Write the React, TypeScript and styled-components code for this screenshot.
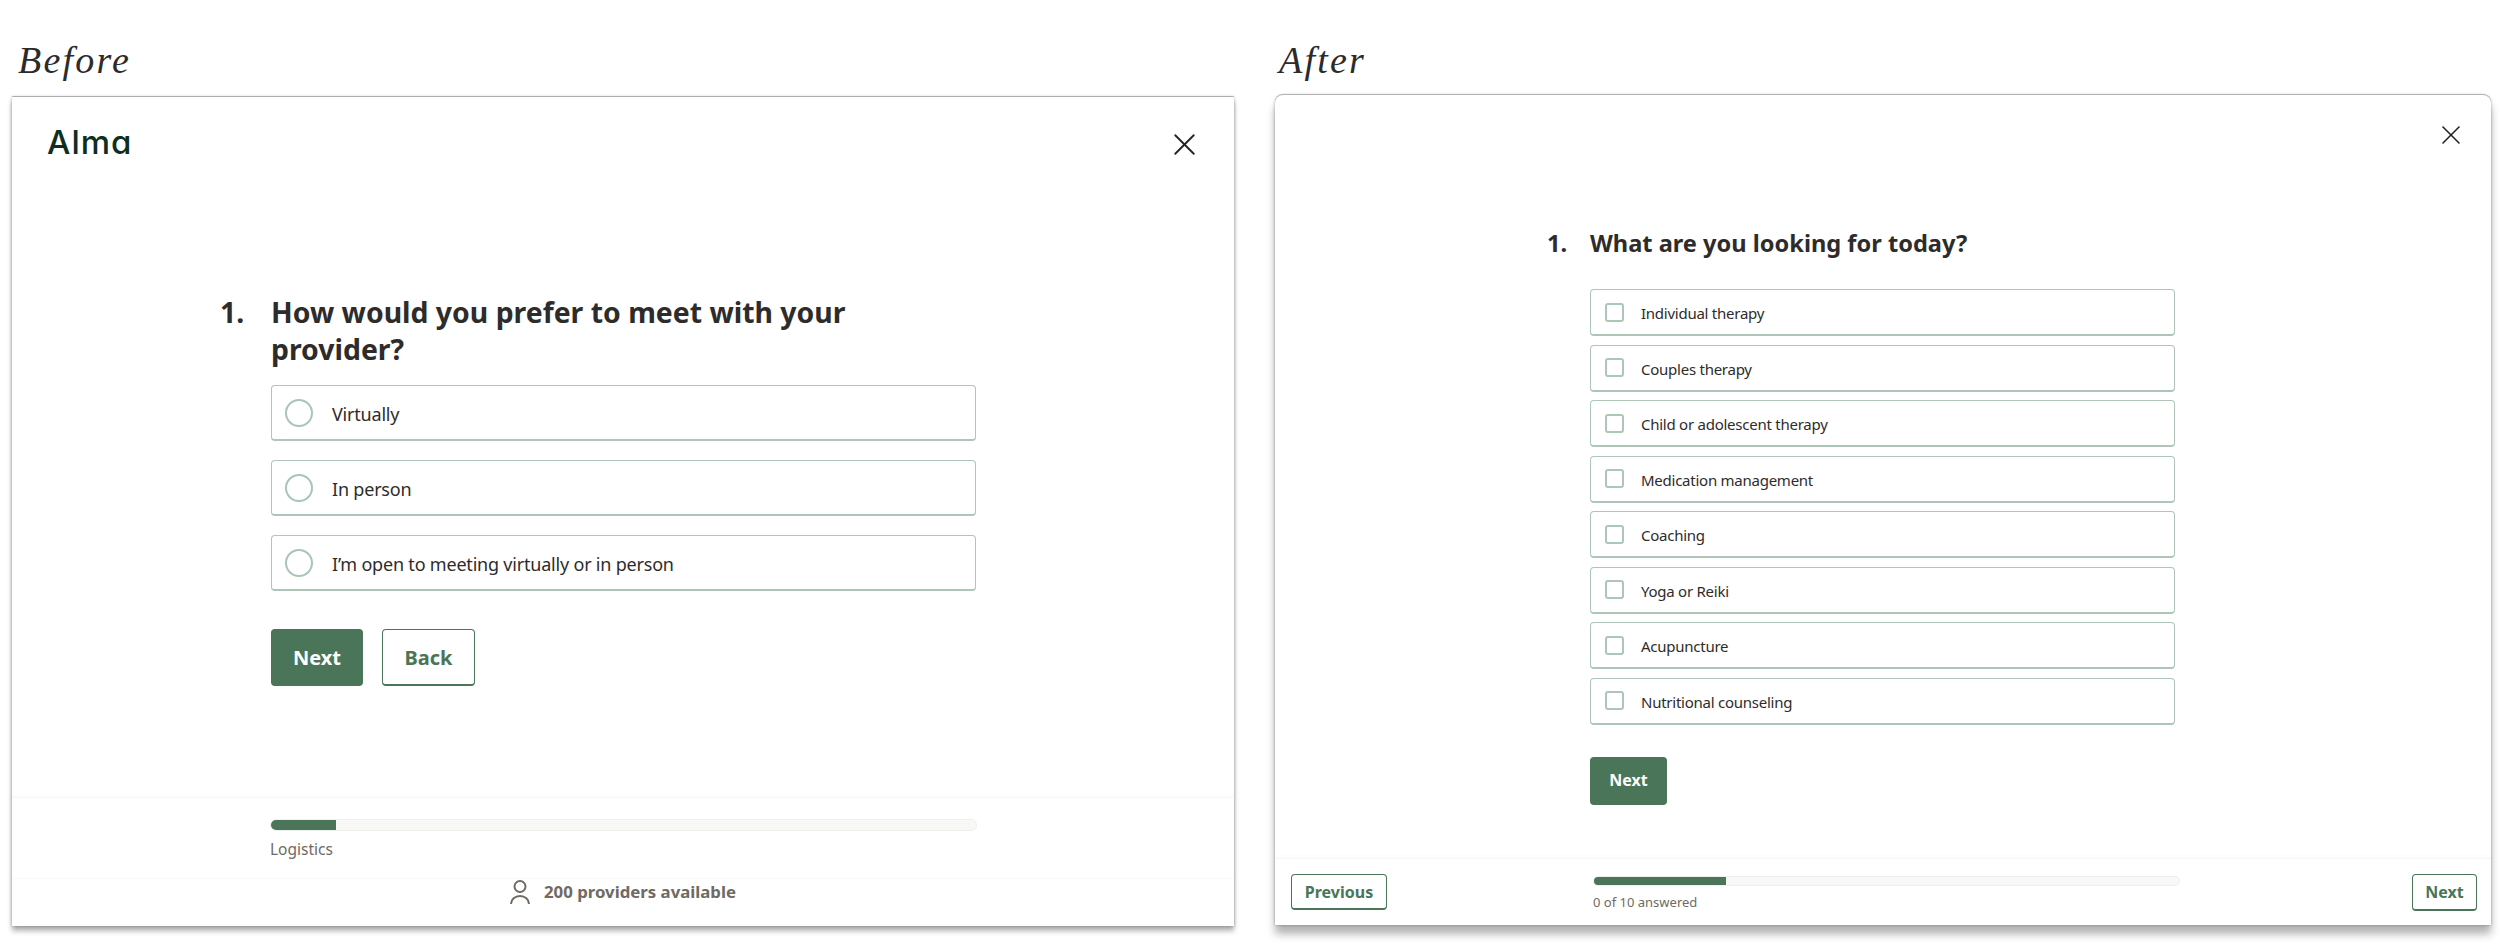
import React from "react";
import styled, { createGlobalStyle } from "styled-components";
import { X } from "lucide-react";

const GREEN = "#4a7558";
const BORDER = "#aec6b8";
const INK = "#2e2c2b";
const MUTED = "#6f6a63";

const GlobalStyle = createGlobalStyle`
  html, body {
    margin: 0;
    background: #ffffff;
    font-family: "Noto Sans", sans-serif;
    color: ${INK};
  }
`;

const Page = styled.div`
  display: flex;
  gap: 41px;
  width: 2500px;
  height: 944px;
  padding-left: 12px;
  box-sizing: border-box;
  overflow: hidden;
`;

const Column = styled.div<{ $width: number }>`
  width: ${(p) => p.$width}px;
  display: flex;
  flex-direction: column;
`;

const Label = styled.div<{ $height: number; $indent: number }>`
  height: ${(p) => p.$height}px;
  padding: 37px 0 0 ${(p) => p.$indent}px;
  box-sizing: border-box;
  font-family: "Liberation Serif", serif;
  font-style: italic;
  font-size: 38px;
  line-height: 46px;
  letter-spacing: 2.2px;
  color: #2b2b2b;
`;

const Card = styled.div<{ $height: number; $radius: number; $drop: number }>`
  height: ${(p) => p.$height}px;
  display: flex;
  flex-direction: column;
  background: #fff;
  border-radius: ${(p) => p.$radius}px ${(p) => p.$radius}px 0 0;
  box-shadow: 0 ${(p) => p.$drop}px ${(p) => p.$drop}px rgba(0, 0, 0, 0.3), 0 0 3px rgba(0, 0, 0, 0.3),
    0 -1px 0 #c6c6c6;
`;

const Header = styled.div<{ $height: number; $padRight: number; $end?: boolean }>`
  height: ${(p) => p.$height}px;
  flex: none;
  display: flex;
  align-items: center;
  justify-content: ${(p) => (p.$end ? "flex-end" : "space-between")};
  padding: 0 ${(p) => p.$padRight}px 0 35px;
  box-sizing: border-box;
  color: #222;
`;

const Logo = styled.div`
  font-family: "Inter", sans-serif;
  font-feature-settings: "cv11";
  font-weight: 500;
  font-size: 33px;
  letter-spacing: 1px;
  padding-bottom: 4px;
  color: #0e2e23;
`;

const Main = styled.div<{ $left: number; $top: number }>`
  flex: 1;
  padding: ${(p) => p.$top}px 0 0 ${(p) => p.$left}px;
`;

const QuestionRow = styled.div<{ $size: number; $line: number; $numWidth: number; $width: number; $gap: number }>`
  display: flex;
  width: ${(p) => p.$width}px;
  margin-bottom: ${(p) => p.$gap}px;
  font-size: ${(p) => p.$size}px;
  line-height: ${(p) => p.$line}px;
  font-weight: 700;
  color: ${INK};
  span:first-child {
    width: ${(p) => p.$numWidth}px;
    flex: none;
  }
`;

const Options = styled.div<{ $width: number; $gap: number; $left: number }>`
  display: flex;
  flex-direction: column;
  gap: ${(p) => p.$gap}px;
  width: ${(p) => p.$width}px;
  margin-left: ${(p) => p.$left}px;
`;

const Option = styled.div<{ $height: number; $size: number; $pad: number; $gap: number; $tracking: number }>`
  height: ${(p) => p.$height}px;
  box-sizing: border-box;
  display: flex;
  align-items: center;
  gap: ${(p) => p.$gap}px;
  padding-left: ${(p) => p.$pad}px;
  border: 1px solid ${BORDER};
  border-bottom-width: 2px;
  border-radius: 4px;
  font-size: ${(p) => p.$size}px;
  letter-spacing: ${(p) => p.$tracking}px;
  color: ${INK};
`;

const OptionText = styled.span`
  padding-top: 2px;
`;

const Radio = styled.span`
  width: 28px;
  height: 28px;
  box-sizing: border-box;
  border: 2.5px solid #a9c5b5;
  border-radius: 50%;
`;

const Check = styled.span`
  width: 19px;
  height: 19px;
  box-sizing: border-box;
  border: 2px solid ${BORDER};
  border-radius: 3px;
`;

const Actions = styled.div<{ $top: number; $left: number }>`
  display: flex;
  gap: 19px;
  margin: ${(p) => p.$top}px 0 0 ${(p) => p.$left}px;
`;

const Button = styled.div<{ $w: number; $h: number; $size: number; $solid?: boolean; $alignEnd?: boolean }>`
  width: ${(p) => p.$w}px;
  height: ${(p) => p.$h}px;
  box-sizing: border-box;
  display: flex;
  align-items: center;
  justify-content: center;
  justify-self: ${(p) => (p.$alignEnd ? "end" : "start")};
  border: 1px solid ${GREEN};
  border-bottom-width: 2px;
  border-radius: 4px;
  background: ${(p) => (p.$solid ? GREEN : "#fff")};
  color: ${(p) => (p.$solid ? "#fff" : GREEN)};
  font-size: ${(p) => p.$size}px;
  font-weight: 700;
`;

const Footer = styled.div<{ $height: number }>`
  height: ${(p) => p.$height}px;
  flex: none;
  border-top: 1px solid #f6f6f4;
  box-shadow: 0 -3px 4px rgba(0, 0, 0, 0.015);
  box-sizing: border-box;
`;

const ProgressBlock = styled.div<{ $top: number; $left: number; $width: number }>`
  width: ${(p) => p.$width}px;
  margin-left: ${(p) => p.$left}px;
  padding-top: ${(p) => p.$top}px;
`;

const Track = styled.div<{ $height: number }>`
  height: ${(p) => p.$height}px;
  background: #f8f8f6;
  border: 1px solid #efefec;
  box-sizing: border-box;
  border-radius: 6px;
  overflow: hidden;
`;

const Fill = styled.div`
  height: 100%;
  background: ${GREEN};
`;

const ProgressLabel = styled.div<{ $size: number; $top: number }>`
  margin-top: ${(p) => p.$top}px;
  font-size: ${(p) => p.$size}px;
  color: ${MUTED};
`;

const ProvidersBar = styled.div`
  height: 47px;
  margin-top: 18px;
  padding-bottom: 21px;
  box-sizing: border-box;
  border-top: 1px solid #f8f8f6;
  display: flex;
  align-items: center;
  justify-content: center;
  gap: 14px;
  font-size: 16.8px;
  font-weight: 700;
  color: ${MUTED};
`;

const NavRow = styled.div`
  height: 100%;
  display: grid;
  grid-template-columns: 302px 587px 1fr;
  align-items: start;
  padding-top: 15px;
  padding-left: 16px;
  padding-right: 14px;
  box-sizing: border-box;
`;

const PersonIcon = () => (
  <svg width="20" height="26" viewBox="0 0 20 26" fill="none" stroke={MUTED} strokeWidth="2">
    <circle cx="10" cy="7.5" r="5.5" />
    <path d="M1 25a9 8 0 0 1 18 0" />
  </svg>
);

const beforeOptions = ["Virtually", "In person", "I’m open to meeting virtually or in person"];
const afterOptions = [
  "Individual therapy",
  "Couples therapy",
  "Child or adolescent therapy",
  "Medication management",
  "Coaching",
  "Yoga or Reiki",
  "Acupuncture",
  "Nutritional counseling",
];

export default function App() {
  return (
    <Page>
      <GlobalStyle />
      <Column $width={1222}>
        <Label $height={97} $indent={6}>Before</Label>
        <Card $height={829} $radius={0} $drop={5}>
          <Header $height={94} $padRight={31}>
            <Logo>Alma</Logo>
            <X size={37} strokeWidth={1.2} />
          </Header>
          <Main $left={208} $top={103}>
            <QuestionRow $size={28.4} $line={37} $numWidth={51} $width={680} $gap={17}>
              <span>1.</span>
              <span>How would you prefer to meet with your provider?</span>
            </QuestionRow>
            <Options $width={705} $gap={19} $left={51}>
              {beforeOptions.map((text) => (
                <Option key={text} $height={56} $size={18} $pad={13} $gap={19} $tracking={-0.2}>
                  <Radio />
                  <OptionText>{text}</OptionText>
                </Option>
              ))}
            </Options>
            <Actions $top={38} $left={51}>
              <Button $w={92} $h={57} $size={20} $solid>Next</Button>
              <Button $w={93} $h={57} $size={20}>Back</Button>
            </Actions>
          </Main>
          <Footer $height={129}>
            <ProgressBlock $top={21} $left={258} $width={707}>
              <Track $height={12}>
                <Fill style={{ width: `${(65 / 707) * 100}%` }} />
              </Track>
              <ProgressLabel $size={15.5} $top={7}>Logistics</ProgressLabel>
            </ProgressBlock>
            <ProvidersBar>
              <PersonIcon />
              200 providers available
            </ProvidersBar>
          </Footer>
        </Card>
      </Column>
      <Column $width={1216}>
        <Label $height={95} $indent={4}>After</Label>
        <Card $height={830} $radius={8} $drop={9}>
          <Header $height={79} $padRight={24} $end>
            <X size={32} strokeWidth={1.2} />
          </Header>
          <Main $left={272} $top={49}>
            <QuestionRow $size={23.6} $line={40} $numWidth={43} $width={800} $gap={26}>
              <span>1.</span>
              <span>What are you looking for today?</span>
            </QuestionRow>
            <Options $width={585} $gap={8.5} $left={43}>
              {afterOptions.map((text) => (
                <Option key={text} $height={47} $size={15} $pad={14} $gap={17} $tracking={-0.25}>
                  <Check />
                  <OptionText>{text}</OptionText>
                </Option>
              ))}
            </Options>
            <Actions $top={32} $left={43}>
              <Button $w={77} $h={48} $size={16} $solid>Next</Button>
            </Actions>
          </Main>
          <Footer $height={67}>
            <NavRow>
              <Button $w={96} $h={36} $size={16}>Previous</Button>
              <ProgressBlock $top={2} $left={0} $width={587}>
                <Track $height={10}>
                  <Fill style={{ width: `${(132 / 587) * 100}%` }} />
                </Track>
                <ProgressLabel $size={13} $top={7}>0 of 10 answered</ProgressLabel>
              </ProgressBlock>
              <Button $w={65} $h={37} $size={16} $alignEnd>Next</Button>
            </NavRow>
          </Footer>
        </Card>
      </Column>
    </Page>
  );
}
